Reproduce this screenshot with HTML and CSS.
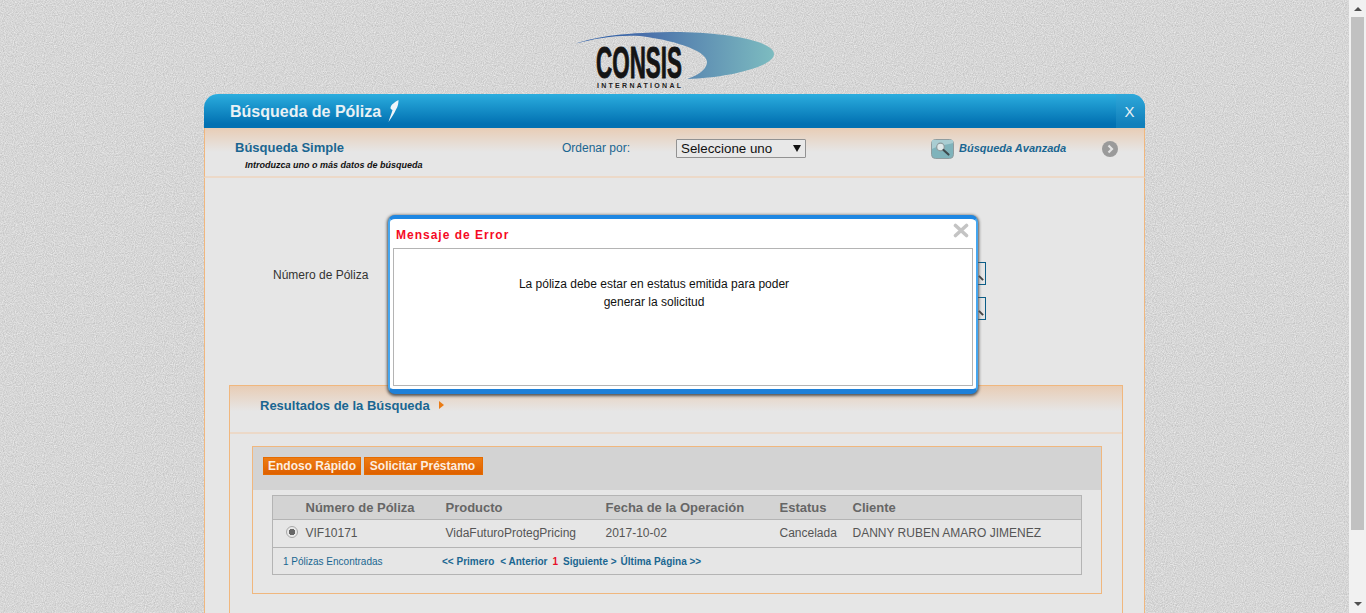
FILE: index.html
```html
<!DOCTYPE html>
<html lang="es">

<head>
  <meta charset="UTF-8">
  <title>Búsqueda de Póliza</title>
  <link rel="stylesheet" href="styles.css">
</head>

<body>

  <div class="page">
    <header class="logo-bar">
      <svg class="logo" viewBox="570 28 210 64" width="210" height="64">
        <defs>
          <linearGradient id="swoosh" x1="0" x2="1" y1="0" y2="0">
            <stop offset="0" stop-color="#1f55a5"/>
            <stop offset="0.35" stop-color="#4a70aa"/>
            <stop offset="1" stop-color="#7dbcc0"/>
          </linearGradient>
        </defs>
        <path fill="url(#swoosh)" d="M576 43.500C595 37 625 32 680 32C732 33 774 42 774 54C774 67 726 78 687 79C700 75 707 68 707 62C707 50 670 39.500 640 36C620 34.500 595 38 576 43.500Z"/>
        <text class="logo-name" x="596" y="78" textLength="86" lengthAdjust="spacingAndGlyphs">CONSIS</text>
        <text class="logo-sub" x="597" y="88" textLength="84">INTERNATIONAL</text>
      </svg>
    </header>

    <main class="panel">
      <div class="panel-title">
        <h1>Búsqueda de Póliza</h1>
        <svg class="feather" viewBox="0 0 12 22" width="12" height="22">
          <path fill="#eef5fa" d="M10.500 0C7 2 3 4.500 2.500 7.500C2.300 9 3.500 9.500 4.500 10C3.500 14 1.500 18 0.500 22C3 18 6.500 13.500 8 9.500C10 6.500 10.500 3 10.500 0Z"/>
        </svg>
        <a class="panel-close">X</a>
      </div>

      <div class="search-head">
        <div class="search-simple">
          <h2>Búsqueda Simple</h2>
          <p>Introduzca uno o más datos de búsqueda</p>
        </div>
        <label class="order-label" for="order">Ordenar por:</label>
        <select class="order-select" id="order">
          <option>Seleccione uno</option>
        </select>
        <a class="advanced">
          <svg class="advanced-icon" viewBox="0 0 23 20" width="23" height="20">
            <rect x="0.500" y="0.500" width="22" height="19" rx="4" fill="#7fb3bb" stroke="#8f9c9f"/>
            <path fill="#a9cdd2" d="M1 10C8 6 15 6 22 4V1H1Z"/>
            <circle cx="9.500" cy="8" r="3.800" fill="#dfe9ea" stroke="#8d9a9c" stroke-width="1.200"/>
            <path d="M12.500 11L17.500 15.500" stroke="#3f4a4d" stroke-width="2.200" stroke-linecap="round"/>
          </svg>
          <span>Búsqueda Avanzada</span>
        </a>
        <svg class="next-icon" viewBox="0 0 16 16" width="16" height="16">
          <circle cx="8" cy="8" r="8" fill="#9a9a9a"/>
          <path d="M6.500 4.500L10 8L6.500 11.500" fill="none" stroke="#e4e4e4" stroke-width="2.200"/>
        </svg>
      </div>

      <form class="search-form">
        <label class="policy-label" for="policy">Número de Póliza</label>
        <div class="search-fields">
          <div class="search-field"><input id="policy" type="text"></div>
          <div class="search-field"><input type="text"></div>
        </div>
      </form>

      <section class="results">
        <div class="results-inner">
          <div class="results-head">
            <h3>Resultados de la Búsqueda</h3>
            <span class="results-arrow"></span>
          </div>
          <div class="results-box">
            <div class="actions">
              <button class="btn-endoso" type="button">Endoso Rápido</button>
              <button class="btn-loan" type="button">Solicitar Préstamo</button>
            </div>
            <table class="grid">
              <colgroup>
                <col class="col-check">
                <col class="col-policy">
                <col class="col-product">
                <col class="col-date">
                <col class="col-status">
                <col>
              </colgroup>
              <thead>
                <tr>
                  <th></th>
                  <th>Número de Póliza</th>
                  <th>Producto</th>
                  <th>Fecha de la Operación</th>
                  <th>Estatus</th>
                  <th>Cliente</th>
                </tr>
              </thead>
              <tbody>
                <tr>
                  <td class="check-cell"><span class="radio"></span></td>
                  <td>VIF10171</td>
                  <td>VidaFuturoProtegPricing</td>
                  <td>2017-10-02</td>
                  <td>Cancelada</td>
                  <td>DANNY RUBEN AMARO JIMENEZ</td>
                </tr>
              </tbody>
              <tfoot>
                <tr>
                  <td colspan="6">
                    <div class="pager-row">
                      <span class="found">1 Pólizas Encontradas</span>
                      <div class="pager">
                        <span>&lt;&lt; Primero</span>
                        <span>&lt; Anterior</span>
                        <b>1</b>
                        <span>Siguiente &gt;</span>
                        <span>Última Página &gt;&gt;</span>
                      </div>
                    </div>
                  </td>
                </tr>
              </tfoot>
            </table>
          </div>
        </div>
      </section>
    </main>

    <div class="dialog">
      <div class="dialog-head">
        <span>Mensaje de Error</span>
        <svg class="dialog-close" viewBox="0 0 16 15" width="16" height="15">
          <path d="M2.500 2.500L13.500 12.500M13.500 2.500L2.500 12.500" stroke="#c4c4c4" stroke-width="3.600" stroke-linecap="round"/>
        </svg>
      </div>
      <div class="dialog-body">
        <p>La póliza debe estar en estatus emitida para poder generar la solicitud</p>
      </div>
    </div>
  </div>

  <div class="scrollbar">
    <span class="scroll-up"></span>
    <span class="scroll-thumb"></span>
    <span class="scroll-down"></span>
  </div>

</body>

</html>
```

FILE: styles.css
```css
:root {
  --blue-text: #1a6691;
  --orange-line: #f0b77e;
  --peach: #e8cdb6;
  --panel-bg: #e6e6e6;
  --grey-line: #b4b4b4;
}

* {
  margin: 0;
  padding: 0;
  box-sizing: border-box;
  font-family: 'Liberation Sans', Arial, sans-serif;
}

html,
body {
  height: 100%;
  overflow: hidden;
}

body {
  display: flex;
  background: #d8d8d8;
}

.page {
  position: relative;
  flex: 1;
  display: flex;
  flex-direction: column;
  align-items: center;
  background: #d6d6d6 url("data:image/svg+xml,%3Csvg xmlns='http://www.w3.org/2000/svg' width='400' height='400'%3E%3Cfilter id='n' x='0' y='0' width='100%25' height='100%25' color-interpolation-filters='sRGB'%3E%3CfeTurbulence type='fractalNoise' baseFrequency='.9' numOctaves='2' stitchTiles='stitch'/%3E%3CfeColorMatrix values='.22 0 0 0 .73 .22 0 0 0 .73 .22 0 0 0 .73 0 0 0 0 1'/%3E%3C/filter%3E%3Crect width='400' height='400' filter='url(%23n)'/%3E%3C/svg%3E");
}

/* Logo */
.logo-bar {
  height: 94px;
  flex: none;
  padding-top: 28px;
}

.logo {
  display: block;
}

.logo-name {
  font-weight: bold;
  font-size: 45px;
  fill: #141414;
  stroke: #141414;
  stroke-width: 1px;
}

.logo-sub {
  font-weight: bold;
  font-size: 7px;
  fill: #222;
}

/* Main panel */
.panel {
  width: 941px;
  flex: none;
  background: var(--panel-bg);
  border-radius: 14px 14px 0 0;
}

.panel-title {
  height: 34px;
  display: flex;
  align-items: center;
  padding: 1px 0 0 26px;
  border-radius: 14px 14px 0 0;
  background: linear-gradient(#2badde, #0271b2 88%);
  color: #e9f1f5;
}

.panel-title h1 {
  font-size: 16px;
}

.feather {
  margin-left: 7px;
  margin-top: -2px;
}

.panel-close {
  width: 29px;
  align-self: stretch;
  margin: -1px 0 0 auto;
  padding-right: 2px;
  display: flex;
  align-items: center;
  justify-content: center;
  font-size: 15px;
  border-radius: 0 14px 0 0;
  background: linear-gradient(#2ea8da, #1280bb 88%);
}

.search-head {
  height: 50px;
  display: flex;
  align-items: flex-start;
  padding: 13px 26px 0 30px;
  border: solid var(--orange-line);
  border-width: 0 1px 2px;
  border-bottom-color: #ecd9c8;
  background: linear-gradient(var(--peach), var(--panel-bg) 50%);
}

.search-simple {
  width: 327px;
}

.search-simple h2 {
  font-size: 13px;
  line-height: 14px;
  color: var(--blue-text);
}

.search-simple p {
  margin: 5px 0 0 10px;
  font-size: 9px;
  line-height: 11px;
  font-weight: bold;
  font-style: italic;
  color: #111;
  white-space: nowrap;
}

.order-label {
  width: 114px;
  font-size: 12px;
  line-height: 14px;
  color: var(--blue-text);
}

.order-select {
  width: 130px;
  height: 19px;
  margin-top: -2px;
  padding-left: 4px;
  font-size: 13.333px;
  color: #111;
  border: 1px solid #929292;
  border-radius: 1px;
  appearance: none;
  background: #e8e8e8 url("data:image/svg+xml,%3Csvg xmlns='http://www.w3.org/2000/svg' width='8' height='7'%3E%3Cpath d='M0 0H8L4 7Z' fill='%23111'/%3E%3C/svg%3E") no-repeat 116px 5px;
}

.advanced {
  margin-left: 125px;
  margin-top: -2px;
  display: flex;
  align-items: flex-start;
  gap: 5px;
  font-size: 11px;
  line-height: 15px;
  font-weight: bold;
  font-style: italic;
  color: var(--blue-text);
}

.advanced span {
  margin-top: 2px;
}

.advanced-icon {
  flex: none;
}

.next-icon {
  margin-left: auto;
}

/* Search form */
.search-form {
  height: 207px;
  display: flex;
  padding: 84px 158px 0 68px;
  border: solid var(--orange-line);
  border-width: 0 1px;
}

.policy-label {
  width: 130px;
  padding-top: 6px;
  font-size: 12px;
  line-height: 14px;
  color: #333;
}

.search-fields {
  flex: 1;
  display: flex;
  flex-direction: column;
  gap: 12px;
}

.search-field {
  position: relative;
}

.search-field input {
  display: block;
  width: 100%;
  height: 23px;
  border: 1px solid #0b5d87;
  background: var(--panel-bg);
}

.search-field::after {
  content: "";
  position: absolute;
  right: 2px;
  top: 15px;
  width: 6px;
  height: 2px;
  background: #444;
  transform: rotate(45deg);
}

/* Results */
.results {
  padding: 0 21px 0 24px;
  border: solid var(--orange-line);
  border-width: 0 1px;
}

.results-inner {
  padding-bottom: 40px;
  border: solid var(--orange-line);
  border-width: 1px 1px 0;
}

.results-head {
  height: 48px;
  display: flex;
  align-items: flex-start;
  padding: 12px 0 0 30px;
  border-bottom: 2px solid #ecd9c8;
  background: linear-gradient(var(--peach), var(--panel-bg) 55%);
}

.results-head h3 {
  font-size: 13px;
  line-height: 16px;
  color: var(--blue-text);
}

.results-arrow {
  width: 0;
  height: 0;
  margin: 3px 0 0 9px;
  border: 4px solid transparent;
  border-left: 5px solid #ea7b14;
}

.results-box {
  height: 148px;
  margin: 12px 20px 0 22px;
  border: 1px solid var(--orange-line);
}

.actions {
  height: 43px;
  display: flex;
  align-items: flex-start;
  gap: 3px;
  padding: 10px 0 0 10px;
  background: #d3d3d3;
}

.actions button {
  height: 18px;
  border: 1px solid #e56b00;
  background: linear-gradient(#ee7c12, #de6000);
  color: #fdeee0;
  font-size: 12px;
  font-weight: bold;
  white-space: nowrap;
}

.btn-endoso {
  width: 98px;
}

.btn-loan {
  width: 119px;
  padding-right: 2px;
}

.grid {
  width: 810px;
  margin: 5px 0 0 19px;
  border-collapse: collapse;
  table-layout: fixed;
  border: 1px solid var(--grey-line);
}

.col-check {
  width: 33px;
}

.col-policy {
  width: 140px;
}

.col-product {
  width: 160px;
}

.col-date {
  width: 174px;
}

.col-status {
  width: 73px;
}

.grid th {
  height: 24px;
  text-align: left;
  font-size: 13px;
  color: #666;
  background: #d3d3d3;
  border-bottom: 1px solid var(--grey-line);
}

.grid tbody td {
  height: 28px;
  padding-bottom: 2px;
  font-size: 12px;
  color: #555;
  border-bottom: 1px solid var(--grey-line);
}

.grid tfoot td {
  height: 27px;
}

.grid tbody .check-cell {
  padding: 0 0 0 13px;
}

.radio {
  display: block;
  width: 12px;
  height: 12px;
  margin-top: -4px;
  border-radius: 50%;
  border: 1px solid #a8a8a8;
  background: radial-gradient(circle, #666 0 3px, #e8e8e8 3.500px);
}

.pager-row {
  display: flex;
  padding-left: 10px;
}

.found {
  width: 159px;
  font-size: 10px;
  color: var(--blue-text);
}

.pager {
  display: flex;
  gap: 5px;
  font-size: 10px;
  font-weight: bold;
  color: var(--blue-text);
  white-space: nowrap;
}

.pager span:first-child {
  margin-right: 1px;
}

.pager span:nth-of-type(3) {
  margin-right: -1px;
}

.pager b {
  color: #e8102a;
}

/* Error dialog */
.dialog {
  position: absolute;
  left: 388px;
  top: 215px;
  width: 590px;
  height: 179px;
  padding: 0 3px 3px;
  display: flex;
  flex-direction: column;
  background: #fff;
  border: solid #45a6ef;
  border-width: 4px 2px 5px;
  border-top-color: #1e87e2;
  border-bottom-color: #1e80d8;
  border-radius: 7px;
  box-shadow: 0 1px 3px 1px #555;
}

.dialog-head {
  height: 29px;
  flex: none;
  display: flex;
  align-items: center;
  justify-content: space-between;
  padding: 2px 4px 0 3px;
  font-size: 12px;
  font-weight: bold;
  letter-spacing: 1px;
  color: #f50a25;
}

.dialog-close {
  margin-top: -8px;
}

.dialog-body {
  flex: 1;
  border: 1px solid var(--grey-line);
}

.dialog-body p {
  width: 300px;
  margin: 26px 0 0 110px;
  font-size: 12px;
  line-height: 18px;
  text-align: center;
  color: #111;
}

/* Scrollbar */
.scrollbar {
  width: 17px;
  flex: none;
  display: flex;
  flex-direction: column;
  align-items: center;
  background: #f1f1f1;
}

.scroll-up,
.scroll-down {
  width: 0;
  height: 0;
  flex: none;
  border: 4px solid transparent;
}

.scroll-up {
  margin-top: 7px;
  border-top: 0;
  border-bottom: 4px solid #505050;
}

.scroll-thumb {
  width: 13px;
  height: 513px;
  margin-top: 6px;
  flex: none;
  background: #c1c1c1;
}

.scroll-down {
  margin-top: 72px;
  border-bottom: 0;
  border-top: 4px solid #505050;
}
```
